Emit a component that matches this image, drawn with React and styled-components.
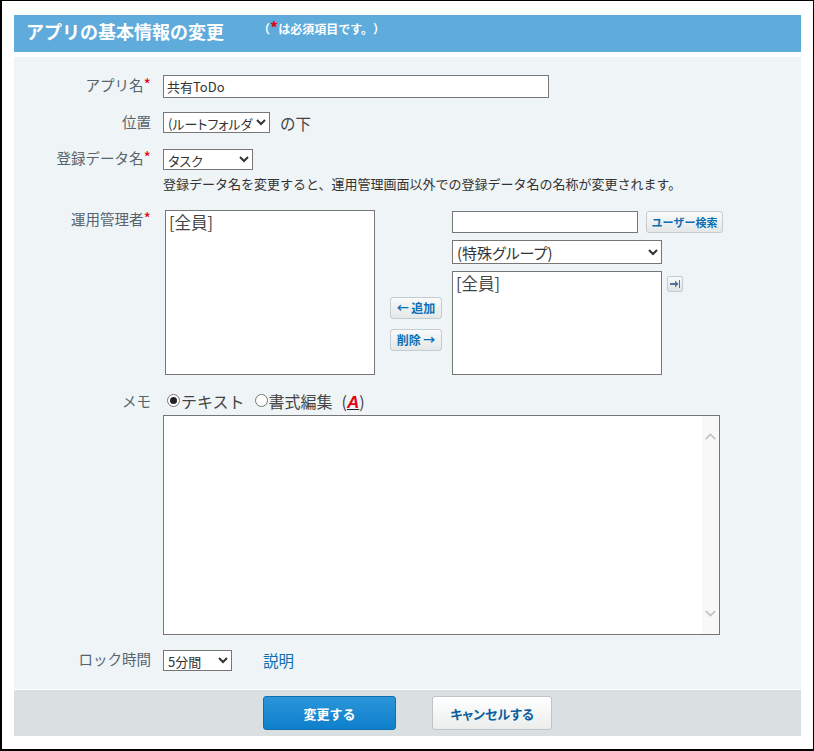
import React from 'react';
import styled, { createGlobalStyle } from 'styled-components';
import { ChevronUp, ChevronDown } from 'lucide-react';

const GlobalStyle = createGlobalStyle`
  html, body { margin: 0; padding: 0; background: #fff; }
  body { font-family: "Noto Sans CJK JP", "Noto Sans", sans-serif; color: #333; text-spacing-trim: space-all; }
  * { box-sizing: border-box; }
`;

const Frame = styled.div`
  width: 814px;
  height: 751px;
  border: 1px solid #000;
  border-width: 1px 1px 2px 2px;
  padding: 14px 12px 13px 12px;
  display: flex;
  flex-direction: column;
`;

const Header = styled.div`
  height: 37px;
  background: #5eabdc;
  color: #fff;
  display: flex;
  align-items: flex-start;
  padding-left: 12px;
  gap: 34px;
`;

const Title = styled.h1`
  margin: 4px 0 0;
  font-size: 18px;
  line-height: 25px;
  font-weight: 700;
`;

const Note = styled.span`
  margin-top: 5px;
  font-size: 12px;
  line-height: 18px;
  font-weight: 700;
`;

const Req = styled.span`
  color: #e60012;
  font-size: 16px;
  line-height: 10px;
`;

const Body = styled.div`
  margin-top: 5px;
  height: 633px;
  background: #eff4f7;
  padding-top: 18px;
  display: flex;
  flex-direction: column;
`;

const Row = styled.div`
  display: flex;
  margin-bottom: ${(p) => p.$mb || 0}px;
`;

const Label = styled.div`
  width: 137px;
  text-align: right;
  font-size: 14.5px;
  line-height: ${(p) => p.$lh || 19}px;
  color: #56646e;
  flex-shrink: 0;
`;

const Content = styled.div`
  margin-left: 12px;
  display: flex;
  flex-direction: ${(p) => (p.$col ? 'column' : 'row')};
  align-items: ${(p) => (p.$col ? 'flex-start' : 'center')};
`;

const TextInput = styled.input`
  width: ${(p) => p.$w}px;
  height: ${(p) => p.$h}px;
  border: 1px solid #767676;
  background: #fff;
  padding: 2px 3px;
  margin: 0;
  font: 13px "Noto Sans CJK JP", sans-serif;
  color: #333;
  outline: none;
  border-radius: 0;
`;

const Select = styled.select`
  width: ${(p) => p.$w}px;
  height: ${(p) => p.$h}px;
  border: 1px solid #767676;
  background: #fff;
  margin: 0;
  padding: 0;
  font-family: "Noto Sans CJK JP", sans-serif;
  font-size: ${(p) => p.$fs || 13}px;
  font-feature-settings: "palt";
  letter-spacing: ${(p) => p.$ls || 0}px;
  color: #333;
  border-radius: 0;
`;

const Aside = styled.span`
  margin-left: 10px;
  font-size: 15.5px;
  color: #444;
`;

const Help = styled.div`
  margin-top: 5px;
  font-size: 13px;
  line-height: 18px;
  color: #333;
`;

const ListBox = styled.div`
  width: ${(p) => p.$w}px;
  height: ${(p) => p.$h}px;
  border: 1px solid #767676;
  background: #fff;
  padding: 1px 3px;
  font-size: 16.5px;
  line-height: 21px;
  color: #444;
  flex-shrink: 0;
`;

const AdminGroup = styled.div`
  display: flex;
  align-items: flex-start;
  margin-left: 2px;
`;

const MoveButtons = styled.div`
  width: 52px;
  margin: 87px 10px 0 15px;
  display: flex;
  flex-direction: column;
  gap: 10px;
`;

const SmallButton = styled.button`
  height: 22px;
  width: ${(p) => p.$w || 52}px;
  padding: 0;
  border: 1px solid #c3ccd1;
  border-radius: 3px;
  background: linear-gradient(#fafafa, #e4e7e8);
  color: #0b6fb3;
  font: 700 ${(p) => p.$fs || 12}px/20px "Noto Sans CJK JP", sans-serif;
  white-space: nowrap;
`;

const PickColumn = styled.div`
  display: flex;
  flex-direction: column;
  margin-top: 1px;
`;

const SearchRow = styled.div`
  display: flex;
  align-items: center;
  gap: 8px;
  margin-bottom: 7px;
`;

const PickRow = styled.div`
  display: flex;
  align-items: flex-start;
  margin-top: 7px;
`;

const JumpButton = styled.button`
  width: 16px;
  height: 16px;
  margin: 5px 0 0 5px;
  padding: 0;
  border: 1px solid #c3ccd1;
  border-radius: 2px;
  background: linear-gradient(#fafafa, #dfe3e5);
  display: flex;
  align-items: center;
  justify-content: center;
`;

const RadioLine = styled.div`
  display: flex;
  align-items: center;
  height: 20px;
  font-size: 16px;
  color: #444;
`;

const Radio = styled.span`
  width: 13px;
  height: 13px;
  margin: 0 1px 0 ${(p) => p.$ml || 0}px;
  border: 1px solid #767676;
  border-radius: 50%;
  background: #fff;
  display: flex;
  align-items: center;
  justify-content: center;
  flex-shrink: 0;
`;

const RadioDot = styled.span`
  width: 7px;
  height: 7px;
  border-radius: 50%;
  background: #222;
`;

const FormatLink = styled.span`
  margin-left: 9px;
`;

const RichA = styled.span`
  color: #e60012;
  font-family: "Liberation Sans", sans-serif;
  font-weight: 700;
  font-style: italic;
  text-decoration: underline;
  text-decoration-color: #222;
  font-size: 17px;
`;

const MemoBox = styled.div`
  position: relative;
  width: 557px;
  height: 220px;
  margin-top: 4px;
`;

const MemoArea = styled.textarea`
  width: 100%;
  height: 100%;
  display: block;
  border: 1px solid #767676;
  background: #fff;
  resize: none;
  outline: none;
  border-radius: 0;
  margin: 0;
  overflow: hidden;
`;

const ScrollTrack = styled.div`
  position: absolute;
  top: 1px;
  right: 1px;
  bottom: 1px;
  width: 17px;
  background: #f8f8f8;
  color: #c4c4c4;
  display: flex;
  flex-direction: column;
  justify-content: space-between;
  align-items: center;
  padding: 12px 0;
`;

const HelpLink = styled.a`
  margin-left: 31px;
  font-size: 15.5px;
  line-height: 20px;
  color: #0b6fb3;
  text-decoration: none;
`;

const Footer = styled.div`
  height: 46px;
  margin-top: 1px;
  background: #dadfe2;
  display: flex;
  justify-content: center;
  align-items: flex-start;
  padding: 6px 0 0 0;
  gap: 36px;
`;

const PrimaryButton = styled.button`
  width: 133px;
  height: 34px;
  padding: 0;
  border: 1px solid #0e6fb0;
  border-radius: 3px;
  background: linear-gradient(#2a95d8, #0f80cc);
  color: #fff;
  font: 700 13px "Noto Sans CJK JP", sans-serif;
`;

const CancelButton = styled.button`
  width: 120px;
  height: 34px;
  padding: 0;
  border: 1px solid #bcc5ca;
  border-radius: 3px;
  background: linear-gradient(#fff, #ebeded);
  color: #0b5f9e;
  font: 700 13px "Noto Sans CJK JP", sans-serif;
  font-feature-settings: "palt";
`;

const App = () => {
  return (
    <>
      <GlobalStyle />
      <Frame>
        <Header>
          <Title>アプリの基本情報の変更</Title>
          <Note>（<Req>*</Req>は必須項目です。）</Note>
        </Header>
        <Body>
          <Row $mb={14}>
            <Label>アプリ名<Req>*</Req></Label>
            <Content>
              <TextInput $w={386} $h={23} defaultValue="共有ToDo" />
            </Content>
          </Row>
          <Row $mb={15}>
            <Label>位置</Label>
            <Content>
              <Select $w={107} $h={21}><option>(ルートフォルダ)</option></Select>
              <Aside>の下</Aside>
            </Content>
          </Row>
          <Row $mb={17}>
            <Label $lh={17}>登録データ名<Req>*</Req></Label>
            <Content $col>
              <Select $w={90} $h={21}><option>タスク</option></Select>
              <Help>登録データ名を変更すると、運用管理画面以外での登録データ名の名称が変更されます。</Help>
            </Content>
          </Row>
          <Row $mb={16}>
            <Label $lh={17}>運用管理者<Req>*</Req></Label>
            <AdminGroup>
              <Content>
                <ListBox $w={210} $h={165}>[全員]</ListBox>
              </Content>
              <MoveButtons>
                <SmallButton>← 追加</SmallButton>
                <SmallButton>削除 →</SmallButton>
              </MoveButtons>
              <PickColumn>
                <SearchRow>
                  <TextInput $w={186} $h={22} />
                  <SmallButton $w={77} $fs={11}>ユーザー検索</SmallButton>
                </SearchRow>
                <Select $w={210} $h={24} $fs={15}><option>(特殊グループ)</option></Select>
                <PickRow>
                  <ListBox $w={210} $h={104}>[全員]</ListBox>
                  <JumpButton>
                    <svg width="12" height="10" viewBox="0 0 12 10">
                      <path d="M1 4h5V1.5L9.5 5 6 8.500V6H1z" fill="#56709a" />
                      <path d="M10.500 1v8" stroke="#56709a" strokeWidth="1" />
                    </svg>
                  </JumpButton>
                </PickRow>
              </PickColumn>
            </AdminGroup>
          </Row>
          <Row $mb={15}>
            <Label>メモ</Label>
            <Content $col>
              <RadioLine>
                <Radio $ml={4}><RadioDot /></Radio>テキスト
                <Radio $ml={10} />書式編集
                <FormatLink>(<RichA>A</RichA>)</FormatLink>
              </RadioLine>
              <MemoBox>
                <MemoArea />
                <ScrollTrack>
                  <ChevronUp size={17} strokeWidth={2.5} />
                  <ChevronDown size={17} strokeWidth={2.5} />
                </ScrollTrack>
              </MemoBox>
            </Content>
          </Row>
          <Row>
            <Label $lh={17}>ロック時間</Label>
            <Content>
              <Select $w={69} $h={21}><option>5分間</option></Select>
              <HelpLink href="#">説明</HelpLink>
            </Content>
          </Row>
        </Body>
        <Footer>
          <PrimaryButton>変更する</PrimaryButton>
          <CancelButton>キャンセルする</CancelButton>
        </Footer>
      </Frame>
    </>
  );
};

export default App;
